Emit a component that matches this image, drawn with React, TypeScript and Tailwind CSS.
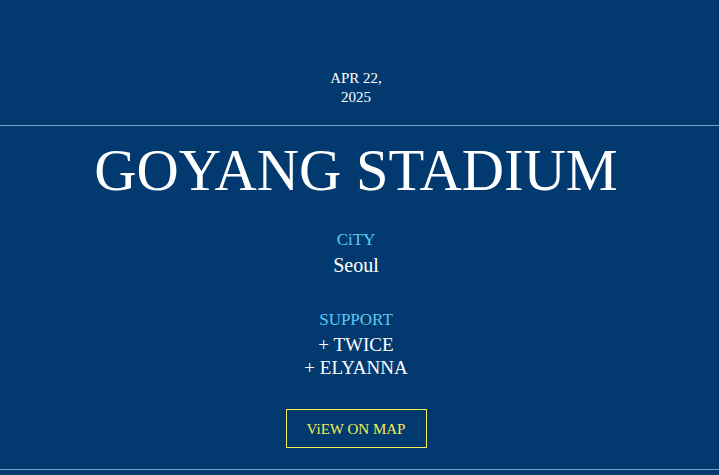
export default function App() {
  return (
    <div className="min-h-[475px] w-full overflow-hidden bg-[#023a6f] font-['Liberation_Serif',serif] text-white">
      <div className="flex w-[712px] flex-col items-center pt-[69px]">
        <p className="text-center text-[15px] leading-[18.5px]">
          APR 22,
          <br />
          2025
        </p>
      </div>

      <div className="mt-[19px] h-px w-full bg-[#7f9dc0]" />

      <div className="flex w-[712px] flex-col items-center">
        <h1 className="mt-[16px] text-[58.5px] leading-[57px]">GOYANG STADIUM</h1>

        <p className="mt-[31px] text-[17px] leading-[20px] text-[#5ec8f2]">CiTY</p>
        <p className="mt-[3px] text-[20px] leading-[24px]">Seoul</p>

        <p className="mt-[33px] text-[17px] leading-[20px] text-[#5ec8f2]">SUPPORT</p>
        <div className="mt-[4px] flex flex-col items-center text-[19px] leading-[22.5px]">
          <span>+ TWICE</span>
          <span>+ ELYANNA</span>
        </div>

        <button className="mt-[30px] flex h-[39px] w-[141px] items-center justify-center border border-[#f4ee4e] text-[15px] leading-[18px] text-[#f4ee4e]">
          ViEW ON MAP
        </button>
      </div>

      <div className="mt-[21px] h-px w-full bg-[#7f9dc0]" />
    </div>
  );
}
